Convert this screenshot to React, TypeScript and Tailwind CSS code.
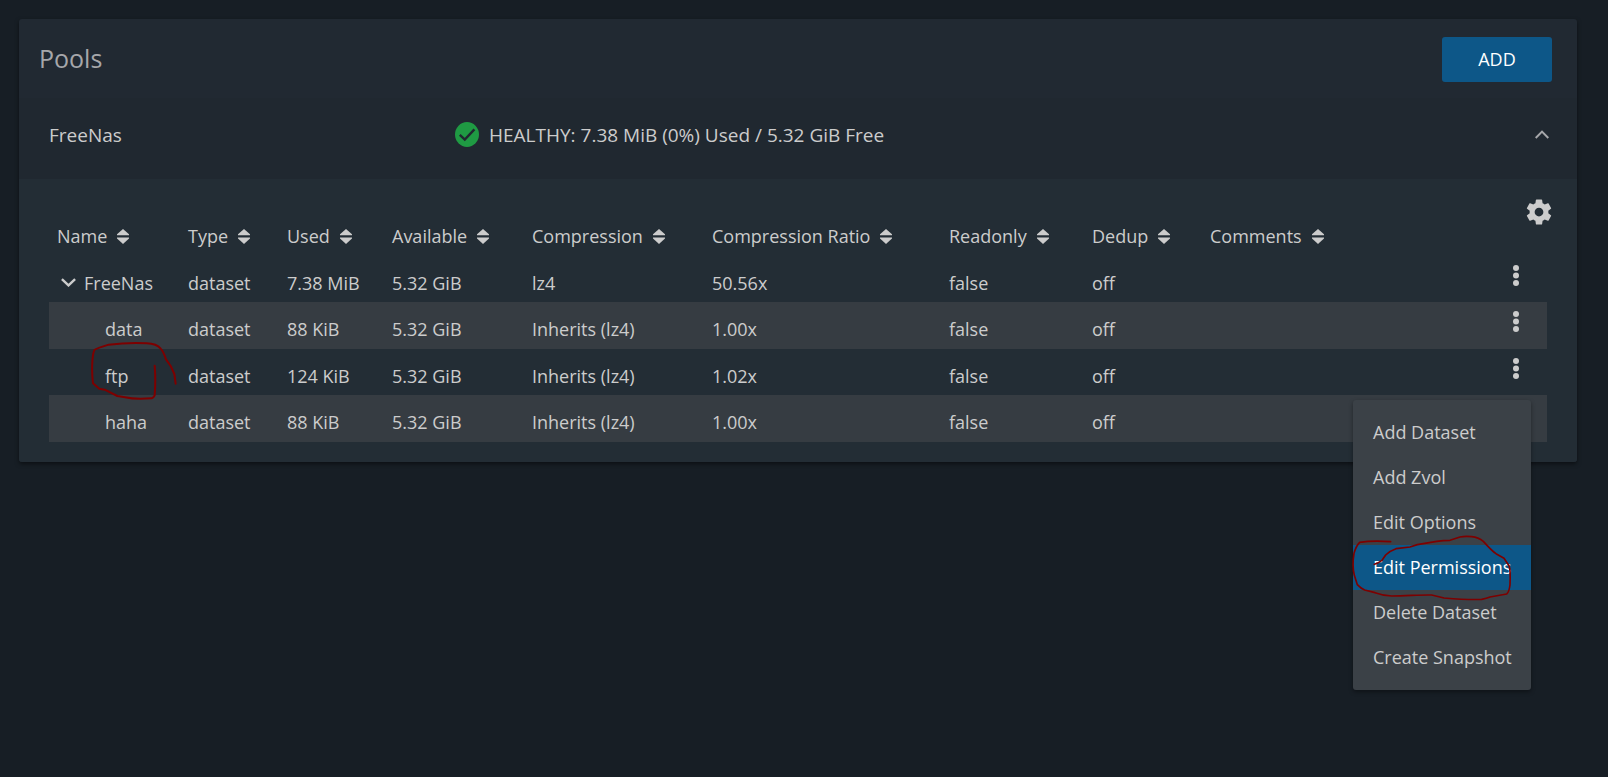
import React from "react";

type Dataset = {
  name: string;
  root?: boolean;
  used: string;
  compression: string;
  ratio: string;
  menuOpen?: boolean;
  circled?: boolean;
};

const columns = [
  { label: "Name", width: "w-[131px]" },
  { label: "Type", width: "w-[99px]" },
  { label: "Used", width: "w-[105px]" },
  { label: "Available", width: "w-[140px]" },
  { label: "Compression", width: "w-[180px]" },
  { label: "Compression Ratio", width: "w-[237px]" },
  { label: "Readonly", width: "w-[143px]" },
  { label: "Dedup", width: "w-[118px]" },
  { label: "Comments", width: "" },
];

const datasets: Dataset[] = [
  { name: "FreeNas", root: true, used: "7.38 MiB", compression: "lz4", ratio: "50.56x" },
  { name: "data", used: "88 KiB", compression: "Inherits (lz4)", ratio: "1.00x" },
  { name: "ftp", used: "124 KiB", compression: "Inherits (lz4)", ratio: "1.02x", menuOpen: true, circled: true },
  { name: "haha", used: "88 KiB", compression: "Inherits (lz4)", ratio: "1.00x" },
];

const actions = [
  "Add Dataset",
  "Add Zvol",
  "Edit Options",
  "Edit Permissions",
  "Delete Dataset",
  "Create Snapshot",
];

function SortIcon() {
  return (
    <svg viewBox="0 0 12 15" className="h-[15px] w-3 shrink-0" fill="currentColor" aria-hidden="true">
      <path d="M6 0 12 5.2V6.2H0V5.2Z" />
      <path d="M0 8.4H12V9.4L6 15 0 9.4Z" />
    </svg>
  );
}

function HealthyIcon() {
  return (
    <svg viewBox="0 0 24 25" className="h-[25px] w-6 shrink-0" aria-hidden="true">
      <ellipse cx="12" cy="12.5" rx="12" ry="12.5" fill="#1f9a43" />
      <path d="M4.8 12.8 9.8 17.6 19.4 7.4" fill="none" stroke="#202830" strokeWidth="2.4" />
    </svg>
  );
}

function GearIcon() {
  return (
    <svg viewBox="0 0 24 24" className="size-[30px]" fill="currentColor" aria-hidden="true">
      <path d="M12,15.5A3.5,3.5 0 0,1 8.5,12A3.5,3.5 0 0,1 12,8.5A3.5,3.5 0 0,1 15.5,12A3.5,3.5 0 0,1 12,15.5M19.43,12.97C19.47,12.65 19.5,12.33 19.5,12C19.5,11.67 19.47,11.34 19.43,11L21.54,9.37C21.73,9.22 21.78,8.95 21.66,8.73L19.66,5.27C19.54,5.05 19.27,4.96 19.05,5.05L16.56,6.05C16.04,5.66 15.5,5.32 14.87,5.07L14.5,2.42C14.46,2.18 14.25,2 14,2H10C9.75,2 9.54,2.18 9.5,2.42L9.13,5.07C8.5,5.32 7.96,5.66 7.44,6.05L4.95,5.05C4.73,4.96 4.46,5.05 4.34,5.27L2.34,8.73C2.21,8.95 2.27,9.22 2.46,9.37L4.57,11C4.53,11.34 4.5,11.67 4.5,12C4.5,12.33 4.53,12.65 4.57,12.97L2.46,14.63C2.27,14.78 2.21,15.05 2.34,15.27L4.34,18.73C4.46,18.95 4.73,19.03 4.95,18.95L7.44,17.94C7.96,18.34 8.5,18.68 9.13,18.93L9.5,21.58C9.54,21.82 9.75,22 10,22H14C14.25,22 14.46,21.82 14.5,21.58L14.87,18.93C15.5,18.67 16.04,18.34 16.56,17.94L19.05,18.95C19.27,19.03 19.54,18.95 19.66,18.73L21.66,15.27C21.78,15.05 21.73,14.78 21.54,14.63L19.43,12.97Z" />
    </svg>
  );
}

function DotsIcon() {
  return (
    <svg viewBox="0 0 6 21" className="h-[21px] w-1.5" fill="currentColor" aria-hidden="true">
      <circle cx="3" cy="3" r="3" />
      <circle cx="3" cy="10.5" r="3" />
      <circle cx="3" cy="18" r="3" />
    </svg>
  );
}

/* Hand-drawn loop around the "ftp" name */
function NameMark() {
  return (
    <svg
      viewBox="150 390 270 180"
      className="pointer-events-none absolute top-[-9px] left-[41px] z-10 h-[60px] w-[90px]"
      fill="none"
      stroke="#7d0000"
      strokeWidth="6"
      strokeLinecap="round"
      strokeLinejoin="round"
      aria-hidden="true"
    >
      <path d="M344 467C346 490 346 530 344 556Q341 563 335 565Q285 569 255 562L232 558L194 539L178 536L159 520C155 490 155 440 163 420Q170 415 206 404C240 400 280 398 320 400Q350 401 362 416Q370 424 378 448L392 468L403 492L407 521" />
    </svg>
  );
}

/* Hand-drawn loop around the "Edit Permissions" entry */
function MenuMark() {
  return (
    <svg
      viewBox="90 582 486 204"
      className="pointer-events-none absolute top-[134px] left-[-3px] h-[68px] w-[162px]"
      fill="none"
      stroke="#7d0000"
      strokeWidth="5"
      strokeLinecap="round"
      strokeLinejoin="round"
      aria-hidden="true"
    >
      <path d="M212 605C185 603 145 603 119 607Q108 618 102 640C98 665 99 690 103 706L112 734Q122 745 134 750L165 758Q190 767 215 768C260 768 300 764 335 765L372 774C410 777 450 780 485 778Q500 775 510 771L560 762Q567 757 570 735C571 710 571 685 567 677L552 655L528 641Q515 632 490 604Q475 592 455 590Q435 588 420 591L390 601Q370 601 350 604L292 614L270 621L228 626Q210 632 197 645L186 661L175 668L163 673" />
    </svg>
  );
}

function ActionsMenu() {
  return (
    <div
      role="menu"
      className="absolute top-[51px] right-4 z-20 w-[178px] rounded-[3px] bg-[#3b4147] py-2.5 shadow-[0_2px_4px_rgba(0,0,0,0.4)]"
    >
      {actions.map((action) => (
        <button
          key={action}
          type="button"
          role="menuitem"
          className={
            action === "Edit Permissions"
              ? "block h-[45px] w-full bg-[#0d5788] pb-0.5 pl-5 text-left whitespace-nowrap text-white"
              : "block h-[45px] w-full pb-0.5 pl-5 text-left whitespace-nowrap"
          }
        >
          {action}
        </button>
      ))}
      <MenuMark />
    </div>
  );
}

export default function App() {
  return (
    <main className="min-h-screen bg-[#171e25] py-[19px] pr-[31px] pl-[19px] font-['Open_Sans','Noto_Sans',sans-serif] text-[18px] leading-5 text-[#cccccc]">
      <section className="rounded-[3px] bg-[#212932] shadow-[0_2px_4px_rgba(0,0,0,0.5)]">
        <header className="flex h-[79px] items-start justify-between pt-[18px] pr-[25px] pl-5">
          <h1 className="text-[25px] leading-[42px] text-[#a6a7aa]">Pools</h1>
          <button type="button" className="h-[45px] w-[110px] rounded-[3px] bg-[#0d5788] pb-0.5 text-white">
            ADD
          </button>
        </header>

        <div className="flex h-[81px] items-center bg-[#202830] pr-7 pb-2 pl-[30px] text-[19px]">
          <h2 className="w-[406px]">FreeNas</h2>
          <p className="flex items-center gap-2.5">
            <HealthyIcon />
            HEALTHY: 7.38 MiB (0%) Used / 5.32 GiB Free
          </p>
          <button type="button" aria-label="Collapse FreeNas" className="ml-auto text-[#a6a7aa]">
            <svg viewBox="0 0 14 9" className="h-[9px] w-3.5" fill="none" stroke="currentColor" strokeWidth="2" aria-hidden="true">
              <path d="M0.7 8 7 1.6 13.3 8" />
            </svg>
          </button>
        </div>

        <div className="rounded-b-[3px] bg-[#232d35] px-[30px] pt-[18px] pb-5">
          <div className="-mr-[7px] flex justify-end">
            <button type="button" aria-label="Pool settings">
              <GearIcon />
            </button>
          </div>
          <table className="-mt-px w-full table-fixed border-collapse text-left">
            <thead>
              <tr className="h-[30px] align-top">
                {columns.map((column) => (
                  <th key={column.label} scope="col" className={`${column.width} p-0 pl-2 font-normal`}>
                    <button type="button" className="flex items-center gap-2.5 whitespace-nowrap">
                      {column.label}
                      <SortIcon />
                    </button>
                  </th>
                ))}
                <td className="w-[62px]" />
              </tr>
            </thead>
            <tbody>
              {datasets.map((row) => (
                <tr key={row.name} className="odd:h-[46px] even:h-[47px] even:bg-[#363c42] [&>td]:px-2 [&>td]:pt-2 [&>td]:pb-px">
                  <td className="relative">
                    {row.root ? (
                      <span className="flex items-center gap-2 pl-1">
                        <svg viewBox="0 0 15 9" className="h-[9px] w-[15px]" fill="none" stroke="currentColor" strokeWidth="2.4" aria-hidden="true">
                          <path d="M0.9 1.2 7.5 7.4 14.1 1.2" />
                        </svg>
                        {row.name}
                      </span>
                    ) : (
                      <span className="block pl-12">{row.name}</span>
                    )}
                    {row.circled && <NameMark />}
                  </td>
                  <td>dataset</td>
                  <td>{row.used}</td>
                  <td>5.32 GiB</td>
                  <td>{row.compression}</td>
                  <td>{row.ratio}</td>
                  <td>false</td>
                  <td>off</td>
                  <td />
                  <td className="relative align-top">
                    <button
                      type="button"
                      aria-label={`Actions for ${row.name}`}
                      className="flex h-[22px] w-full items-center justify-center"
                    >
                      <DotsIcon />
                    </button>
                    {row.menuOpen && <ActionsMenu />}
                  </td>
                </tr>
              ))}
            </tbody>
          </table>
        </div>
      </section>
    </main>
  );
}
